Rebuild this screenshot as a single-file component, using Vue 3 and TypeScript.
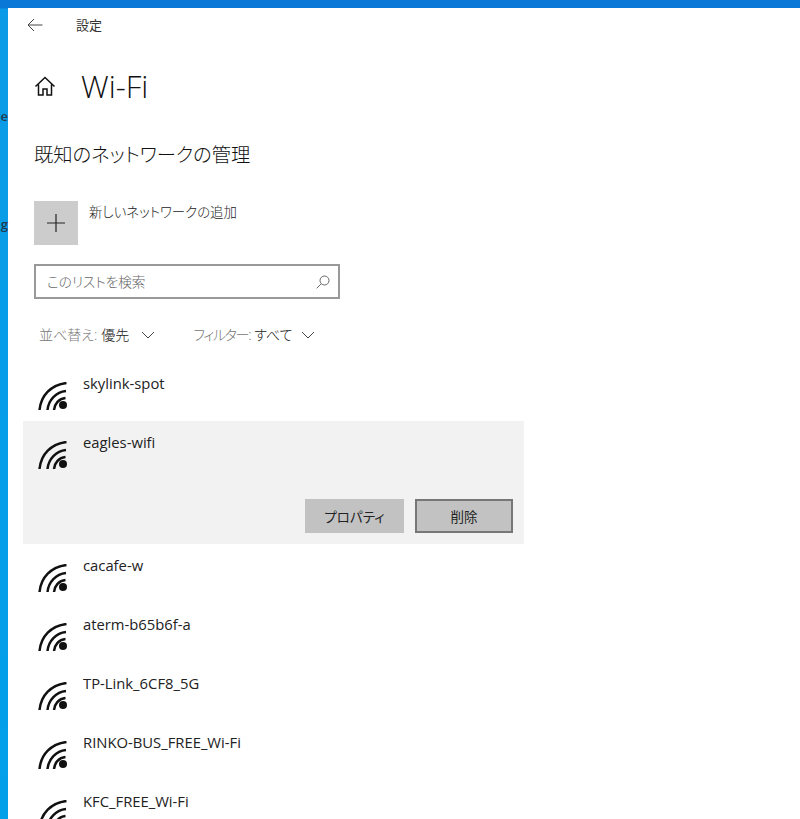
<script setup lang="ts">
const before = ['skylink-spot']
const after = ['cacafe-w', 'aterm-b65b6f-a', 'TP-Link_6CF8_5G', 'RINKO-BUS_FREE_Wi-Fi', 'KFC_FREE_Wi-Fi']
</script>

<template>
  <div class="desktop">
    <span class="peek peek-a">ge</span>
    <span class="peek peek-b">g</span>
    <main class="window">
      <header class="titlebar">
        <svg class="back" width="16" height="14" viewBox="0 0 16 14" fill="none" stroke="#444" stroke-width="1">
          <path d="M15.5 7H1M7 1 1 7l6 6" />
        </svg>
        <span class="title">設定</span>
      </header>
      <div class="heading">
        <svg class="home" width="22" height="20" viewBox="0 0 22 20" fill="none" stroke="#111" stroke-width="1.5">
          <path d="M1.5 10.5 11 1.5l9.500 9M4.500 8.500V19h4.500v-6h4v6h4.500V8.500" />
        </svg>
        <h1>Wi-Fi</h1>
      </div>
      <h2>既知のネットワークの管理</h2>
      <div class="add">
        <span class="add-box">
          <svg width="18" height="18" viewBox="0 0 18 18" stroke="#222" stroke-width="1.200"><path d="M9 0v18M0 9h18" /></svg>
        </span>
        <span class="add-label">新しいネットワークの追加</span>
      </div>
      <div class="search">
        <span class="search-text">このリストを検索</span>
        <svg width="14" height="14" viewBox="0 0 14 14" fill="none" stroke="#666" stroke-width="1">
          <circle cx="8.500" cy="5.500" r="4.500" /><path d="M5.200 8.800.7 13.300" />
        </svg>
      </div>
      <div class="filters">
        <span class="filter"><span class="muted">並べ替え:</span> 優先
          <svg class="chev" width="14" height="8" viewBox="0 0 14 8" fill="none" stroke="#444"><path d="m1 1 6 6 6-6" /></svg>
        </span>
        <span class="filter"><span class="muted tight">フィルター:</span> すべて
          <svg class="chev chev-b" width="14" height="8" viewBox="0 0 14 8" fill="none" stroke="#444"><path d="m1 1 6 6 6-6" /></svg>
        </span>
      </div>
      <ul class="list">
        <li v-for="n in before" :key="n" class="row">
          <svg class="wifi" width="30" height="30" viewBox="0 0 30 30" fill="none" stroke="#111" stroke-width="2.500">
            <path d="M1.500 28C3 13 13 3 28.500 1M9.500 28C10.500 18 18 10 28 9M16 28C16.500 22 21 16.500 27.500 16" /><circle cx="25" cy="23" r="4" fill="#111" stroke="none" />
          </svg>
          <span class="name">{{ n }}</span>
        </li>
        <li class="row selected">
          <div class="row-top">
            <svg class="wifi" width="30" height="30" viewBox="0 0 30 30" fill="none" stroke="#111" stroke-width="2.500">
              <path d="M1.500 28C3 13 13 3 28.500 1M9.500 28C10.500 18 18 10 28 9M16 28C16.500 22 21 16.500 27.500 16" /><circle cx="25" cy="23" r="4" fill="#111" stroke="none" />
            </svg>
            <span class="name">eagles-wifi</span>
          </div>
          <div class="actions">
            <button class="btn">プロパティ</button>
            <button class="btn focus">削除</button>
          </div>
        </li>
        <li v-for="n in after" :key="n" class="row">
          <svg class="wifi" width="30" height="30" viewBox="0 0 30 30" fill="none" stroke="#111" stroke-width="2.500">
            <path d="M1.500 28C3 13 13 3 28.500 1M9.500 28C10.500 18 18 10 28 9M16 28C16.500 22 21 16.500 27.500 16" /><circle cx="25" cy="23" r="4" fill="#111" stroke="none" />
          </svg>
          <span class="name">{{ n }}</span>
        </li>
      </ul>
    </main>
  </div>
</template>

<style>
html, body { margin: 0; overflow: hidden; }
</style>

<style scoped>
.desktop {
  position: relative;
  height: 819px;
  overflow: hidden;
  padding: 8px 0 0 8px;
  box-sizing: border-box;
  background: linear-gradient(180deg, #0a78d6 0, #0a78d6 8px, #0b9be6 9px, #03a0ea 100%);
  font-family: "Open Sans", "Noto Sans CJK JP", sans-serif;
  font-feature-settings: "palt";
  color: #1a1a1a;
}
.peek { position: absolute; font-size: 13px; font-weight: 600; color: #1f3a50; right: 792px; line-height: 14px; }
.peek-a { top: 109px; }
.peek-b { top: 217px; }
.window { background: #fff; height: 811px; overflow: hidden; }
.titlebar { display: flex; align-items: center; height: 34px; padding-left: 19px; }
.title { margin: 0 0 1px 33px; font-size: 13px; color: #333; }
.heading { display: flex; align-items: center; padding: 25px 0 0 26px; height: 38px; }
.home { flex: none; }
.heading h1 { margin: 0 0 0 25px; font-size: 31px; font-weight: 300; line-height: 38px; color: #111; }
h2 { margin: 35px 0 0 26px; font-size: 19.300px; font-weight: 300; line-height: 30px; color: #111; }
.add { display: flex; margin: 31px 0 0 26px; }
.add-box { display: flex; align-items: center; justify-content: center; width: 44px; height: 44px; background: #ccc; }
.add-label { margin-left: 11px; font-size: 13.400px; font-weight: 300; line-height: 22px; color: #222; }
.search {
  display: flex; align-items: center; justify-content: space-between; box-sizing: border-box;
  width: 306px; height: 35px; margin: 19px 0 0 26px; padding: 0 8px 0 11px;
  border: 2px solid #999; font-size: 13.600px; font-weight: 300; color: #666;
}
.search-text { padding-bottom: 2px; }
.filters { display: flex; gap: 38px; margin: 25px 0 0 31px; font-size: 14px; line-height: 22px; color: #222; font-weight: 300; }
.filter { display: flex; align-items: center; gap: 4px; }
.muted { color: #777; }
.tight { letter-spacing: -1.300px; }
.chev { margin-left: 8px; }
.chev-b { margin-left: 5px; }
.list { list-style: none; margin: 16px 0 0 15px; padding: 0; width: 501px; }
.row { display: flex; height: 59px; padding-left: 15px; box-sizing: border-box; position: relative; }
.row-top { display: flex; }
.wifi { flex: none; margin-top: 20px; }
.name { margin: 10px 0 0 15px; font-size: 14.800px; line-height: 22px; color: #222; }
.selected { display: block; height: 123px; background: #f2f2f2; }
.actions { display: flex; justify-content: flex-end; gap: 11px; padding: 28px 11px 0 0; }
.btn {
  box-sizing: border-box; width: 99px; height: 34px; border: 0; background: #c2c2c2;
  font: 400 13.500px "Open Sans", "Noto Sans CJK JP", sans-serif; font-feature-settings: "palt"; color: #222; padding: 0;
}
.focus { width: 98px; border: 2px solid #777; }
</style>
